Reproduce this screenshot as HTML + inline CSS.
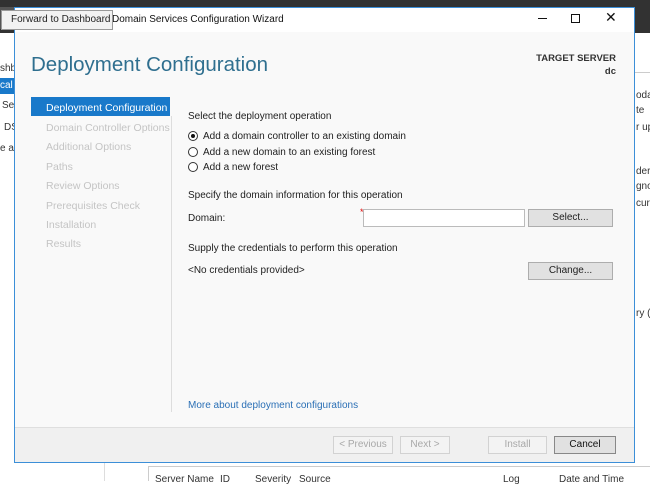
<!DOCTYPE html>
<html><head><style>
*{margin:0;padding:0;box-sizing:border-box}
body{width:650px;height:481px;overflow:hidden;background:#fff;font-family:"Liberation Sans","DejaVu Sans",sans-serif;font-size:10px;color:#1e1e1e;position:relative}
.a{position:absolute;white-space:nowrap}
.nav{color:#c4c4c4;font-size:10.5px;left:46px}
.btn{position:absolute;background:#e1e1e1;border:1px solid #adadad;text-align:center;font-size:10px;line-height:16px;height:18px}
.dis{background:#f3f3f3;border-color:#d2d2d2;color:#a8a8a8}
.rad{position:absolute;left:188px;width:10px;height:10px;border:1px solid #333;border-radius:50%;background:#fff}
.bg{color:#333;font-size:10px}
</style></head><body>
<div class="a" style="left:0;top:0;width:650px;height:33px;background:#323232"></div>
<div class="a" style="left:0;top:7px;width:40px;height:22px;background:#555"></div>
<div class="a" style="left:0;top:78px;width:14px;height:16px;background:#1979ca"></div>
<div class="a bg" style="left:0;top:63px">shb</div>
<div class="a" style="left:0;top:80px;color:#fff;font-size:10px">cal</div>
<div class="a bg" style="left:2px;top:100px">Se</div>
<div class="a bg" style="left:4px;top:122px">DS</div>
<div class="a bg" style="left:0;top:143px">e ar</div>
<div class="a" style="left:634px;top:72px;width:16px;height:1px;background:#ccc"></div>
<div class="a bg" style="left:636px;top:90px">odat</div>
<div class="a bg" style="left:636px;top:105px">te</div>
<div class="a bg" style="left:636px;top:122px">r up</div>
<div class="a bg" style="left:636px;top:166px">der</div>
<div class="a bg" style="left:636px;top:181px">gno</div>
<div class="a bg" style="left:636px;top:198px">curit</div>
<div class="a bg" style="left:636px;top:308px">ry (R</div>
<div class="a" style="left:104px;top:463px;width:1px;height:18px;background:#ddd"></div>
<div class="a" style="left:148px;top:466px;width:502px;height:15px;background:#fff;border-top:1px solid #ccc;border-left:1px solid #ccc"></div>
<div class="a bg" style="left:155px;top:474px">Server Name</div>
<div class="a bg" style="left:220px;top:474px">ID</div>
<div class="a bg" style="left:255px;top:474px">Severity</div>
<div class="a bg" style="left:299px;top:474px">Source</div>
<div class="a bg" style="left:503px;top:474px">Log</div>
<div class="a bg" style="left:559px;top:474px">Date and Time</div>

<div class="a" style="left:14px;top:7px;width:621px;height:456px;background:#f9f9f9;border:1px solid #3c8fd8"></div>
<div class="a" style="left:15px;top:8px;width:619px;height:24px;background:#fff"></div>
<div class="a" style="left:112px;top:14px;font-size:10px;color:#111">Domain Services Configuration Wizard</div>
<div class="a" style="left:538px;top:18px;width:9px;height:1px;background:#111"></div>
<div class="a" style="left:571px;top:14px;width:9px;height:9px;border:1px solid #111"></div>
<div class="a" style="left:605px;top:9px;font-size:14px;color:#111">✕</div>
<div class="a" style="left:1px;top:10px;width:112px;height:20px;background:#f2f2f2;border:1px solid #999;font-size:10px;line-height:18px;padding-left:9px;color:#222">Forward to Dashboard</div>

<div class="a" style="left:31px;top:53px;font-size:20.5px;color:#2f6f8f">Deployment Configuration</div>
<div class="a" style="left:530px;top:52px;font-size:9.5px;font-weight:bold;color:#333;text-align:right;width:86px;line-height:13px">TARGET SERVER<br>dc</div>

<div class="a" style="left:31px;top:97px;width:139px;height:19px;background:#1979ca"></div>
<div class="a" style="left:46px;top:102px;color:#fff;font-size:10.5px">Deployment Configuration</div>
<div class="a nav" style="top:122px">Domain Controller Options</div>
<div class="a nav" style="top:141px">Additional Options</div>
<div class="a nav" style="top:161px">Paths</div>
<div class="a nav" style="top:180px">Review Options</div>
<div class="a nav" style="top:200px">Prerequisites Check</div>
<div class="a nav" style="top:219px">Installation</div>
<div class="a nav" style="top:238px">Results</div>
<div class="a" style="left:171px;top:116px;width:1px;height:296px;background:#ddd"></div>

<div class="a" style="left:188px;top:111px">Select the deployment operation</div>
<div class="rad" style="top:131px"><div style="position:absolute;left:2px;top:2px;width:4px;height:4px;border-radius:50%;background:#111"></div></div>
<div class="a" style="left:203px;top:131px">Add a domain controller to an existing domain</div>
<div class="rad" style="top:147px"></div>
<div class="a" style="left:203px;top:147px">Add a new domain to an existing forest</div>
<div class="rad" style="top:162px"></div>
<div class="a" style="left:203px;top:162px">Add a new forest</div>
<div class="a" style="left:188px;top:190px">Specify the domain information for this operation</div>
<div class="a" style="left:188px;top:213px">Domain:</div>
<div class="a" style="left:360px;top:207px;color:#d00;font-size:9px">*</div>
<div class="a" style="left:363px;top:209px;width:162px;height:18px;background:#fff;border:1px solid #bbb"></div>
<div class="btn" style="left:528px;top:209px;width:85px">Select...</div>
<div class="a" style="left:188px;top:243px">Supply the credentials to perform this operation</div>
<div class="a" style="left:188px;top:265px">&lt;No credentials provided&gt;</div>
<div class="btn" style="left:528px;top:262px;width:85px">Change...</div>
<div class="a" style="left:188px;top:400px;color:#2a6fb5">More about deployment configurations</div>

<div class="a" style="left:15px;top:427px;width:619px;height:35px;background:#f0f0f0;border-top:1px solid #dfdfdf"></div>
<div class="btn dis" style="left:333px;top:436px;width:60px">&lt; Previous</div>
<div class="btn dis" style="left:400px;top:436px;width:50px">Next &gt;</div>
<div class="btn dis" style="left:488px;top:436px;width:59px">Install</div>
<div class="btn" style="left:554px;top:436px;width:62px;border-color:#888;background:#e1e1e1;color:#111">Cancel</div>
</body></html>
